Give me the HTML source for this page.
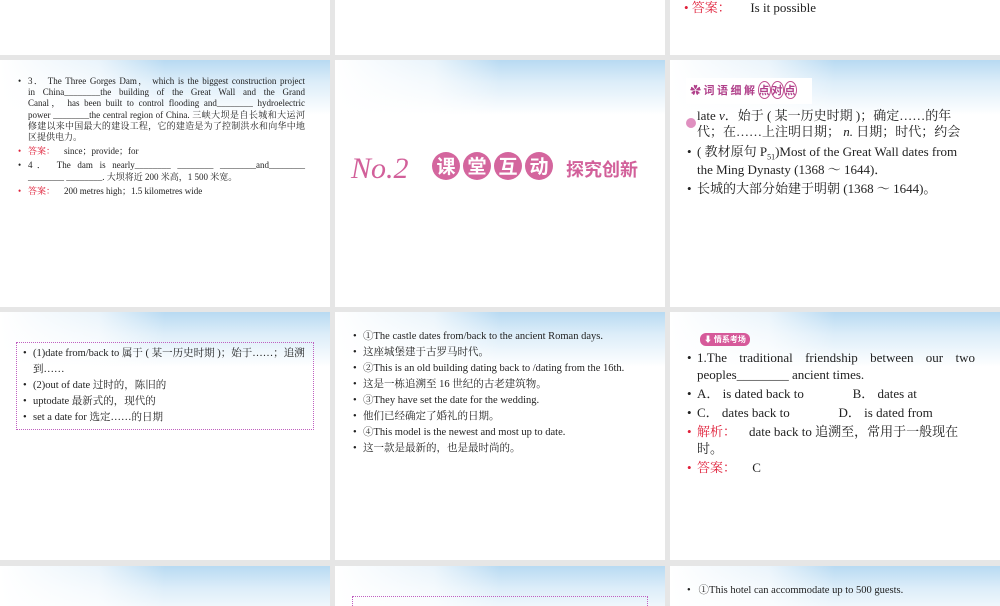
<!DOCTYPE html>
<html><head><meta charset="utf-8"><style>
*{margin:0;padding:0;box-sizing:border-box}
body{width:1000px;height:600px;background:#e6e6e6;position:relative;overflow:hidden;font-family:"Liberation Serif","Noto Serif CJK SC",serif;color:#222}
.s{position:absolute;background:#fff;overflow:hidden}
.sky{position:absolute;left:0;top:0;right:0;height:55px;background:linear-gradient(180deg,#b8daf2 0%,#dcedf9 40%,#fff 100%)}
.sky:after{content:"";position:absolute;left:0;top:0;width:50%;height:100%;background:linear-gradient(90deg,#fff 0%,rgba(255,255,255,.7) 60%,rgba(255,255,255,0))}
.t{position:absolute;white-space:nowrap}
.b:before{content:"•";position:absolute;left:-10px}
.r{color:#e0203a}
.box{position:absolute;border:1px dotted #c060c0}
.j{text-align:justify;text-align-last:justify;white-space:nowrap;overflow:visible}
</style></head><body>
<!-- row 0 -->
<div class="s" style="left:0;top:0;width:330px;height:55px"></div>
<div class="s" style="left:335px;top:0;width:330px;height:55px"><div class="t r" style="left:64px;top:-4px;font-size:6px">date</div></div>
<div class="s" style="left:670px;top:0;width:330px;height:55px"><div class="t" style="left:14px;top:-3px;font-size:13px"><span class="r">• 答案：</span>&nbsp;&nbsp;&nbsp;&nbsp;&nbsp;&nbsp;Is it possible</div></div>

<!-- row 1 -->
<div class="s" style="left:0;top:60px;width:330px;height:247px"><div class="sky"></div>
<div style="position:absolute;left:28px;top:16px;width:277px;font-size:9px;line-height:11.2px">
<div style="position:relative"><span class="b"></span>
<div class="j">3． The Three Gorges Dam， which is the biggest construction project</div>
<div class="j">in China________the building of the Great Wall and the Grand</div>
<div class="j">Canal， has been built to control flooding and________ hydroelectric</div>
<div class="j">power ________the central region of China. 三峡大坝是自长城和大运河</div>
<div class="j">修建以来中国最大的建设工程，它的建造是为了控制洪水和向华中地</div>
<div>区提供电力。</div></div>
<div style="position:relative;margin-top:3px"><span class="b r"></span><span class="r">答案：</span>&nbsp;&nbsp;&nbsp;&nbsp;since；provide；for</div>
<div style="position:relative;margin-top:3px"><span class="b"></span><div class="j">4． The dam is nearly________ ________ ________and________</div><div>________ ________. 大坝将近 200 米高，1 500 米宽。</div></div>
<div style="position:relative;margin-top:3px"><span class="b r"></span><span class="r">答案：</span>&nbsp;&nbsp;&nbsp;&nbsp;200 metres high；1.5 kilometres wide</div>
</div></div>

<div class="s" style="left:335px;top:60px;width:330px;height:247px"><div class="sky"></div>
<div class="t" style="left:16px;top:92px;font-size:30px;font-style:italic;color:#d2609a;font-family:'Liberation Serif',serif">No.2</div>
<div style="position:absolute;left:97px;top:92px;display:flex;gap:3px">
<span style="width:28px;height:28px;border-radius:50%;background:#d4669e;color:#fff;font:bold 19px/28px 'Noto Sans CJK SC',sans-serif;text-align:center">课</span>
<span style="width:28px;height:28px;border-radius:50%;background:#d4669e;color:#fff;font:bold 19px/28px 'Noto Sans CJK SC',sans-serif;text-align:center">堂</span>
<span style="width:28px;height:28px;border-radius:50%;background:#d4669e;color:#fff;font:bold 19px/28px 'Noto Sans CJK SC',sans-serif;text-align:center">互</span>
<span style="width:28px;height:28px;border-radius:50%;background:#d4669e;color:#fff;font:bold 19px/28px 'Noto Sans CJK SC',sans-serif;text-align:center">动</span></div>
<div class="t" style="left:231px;top:96px;font:bold 18px 'Noto Sans CJK SC',sans-serif;color:#d2609a">探究创新</div>
</div>

<div class="s" style="left:670px;top:60px;width:330px;height:247px"><div class="sky"></div>
<div style="position:absolute;left:16px;top:18px;width:126px;height:26px;background:#fff"></div>
<div class="t" style="left:20px;top:22px;font:bold 11px 'Noto Sans CJK SC',sans-serif;color:#b0408a">✿ 词 语 细 解 <span style="border:1px solid #c05090;border-radius:50%">点</span><span style="border:1px solid #c05090;border-radius:50%">对</span><span style="border:1px solid #c05090;border-radius:50%">点</span></div>
<div style="position:absolute;left:16px;top:58px;width:10px;height:10px;border-radius:50%;background:#e090c0"></div>
<div style="position:absolute;left:27px;top:48px;width:278px;font-size:13px;line-height:18px">
<div style="line-height:16px">late <i>v</i>．始于 ( 某一历史时期 )；确定……的年<br>代；在……上注明日期； <i>n.</i> 日期；时代；约会</div>
<div style="position:relative;margin-top:3px;white-space:nowrap"><span class="b"></span>( 教材原句 P<sub style="font-size:8px;line-height:0">51</sub>)Most of the Great Wall dates from<br>the Ming Dynasty (1368 ～ 1644)．</div>
<div style="position:relative;margin-top:1px"><span class="b"></span>长城的大部分始建于明朝 (1368 ～ 1644)。</div>
</div></div>

<!-- row 2 -->
<div class="s" style="left:0;top:312px;width:330px;height:248px"><div class="sky"></div>
<div class="box" style="left:16px;top:30px;width:298px;height:88px"></div>
<div style="position:absolute;left:33px;top:34px;width:278px;font-size:10.5px;line-height:16px">
<div style="position:relative"><span class="b"></span>(1)date from/back to 属于 ( 某一历史时期 )；始于……；追溯到……</div>
<div style="position:relative"><span class="b"></span>(2)out of date 过时的，陈旧的</div>
<div style="position:relative"><span class="b"></span>uptodate 最新式的，现代的</div>
<div style="position:relative"><span class="b"></span>set a date for 选定……的日期</div></div></div>

<div class="s" style="left:335px;top:312px;width:330px;height:248px"><div class="sky"></div>
<div style="position:absolute;left:28px;top:17px;font-size:10.5px;line-height:16px">
<div style="position:relative"><span class="b"></span>①The castle dates from/back to the ancient Roman days.</div>
<div style="position:relative"><span class="b"></span>这座城堡建于古罗马时代。</div>
<div style="position:relative"><span class="b"></span>②This is an old building dating back to /dating from the 16th.</div>
<div style="position:relative"><span class="b"></span>这是一栋追溯至 16 世纪的古老建筑物。</div>
<div style="position:relative"><span class="b"></span>③They have set the date for the wedding.</div>
<div style="position:relative"><span class="b"></span>他们已经确定了婚礼的日期。</div>
<div style="position:relative"><span class="b"></span>④This model is the newest and most up to date.</div>
<div style="position:relative"><span class="b"></span>这一款是最新的，也是最时尚的。</div></div></div>

<div class="s" style="left:670px;top:312px;width:330px;height:248px"><div class="sky"></div>
<div class="t" style="left:30px;top:21px;font:bold 8px 'Noto Sans CJK SC',sans-serif;color:#fff;background:#d65a9a;border-radius:6px;padding:1px 4px">⬇ 情系考场</div>
<div style="position:absolute;left:27px;top:37px;width:278px;font-size:13px;line-height:17px">
<div style="position:relative;text-align:justify;text-align-last:justify"><span class="b"></span>1.The traditional friendship between our two</div>
<div>peoples________ ancient times.</div>
<div style="position:relative;margin-top:2px"><span class="b"></span>A． is dated back to&nbsp;&nbsp;&nbsp;&nbsp;&nbsp;&nbsp;&nbsp;&nbsp;&nbsp;&nbsp;&nbsp;&nbsp;&nbsp;&nbsp;&nbsp;B． dates at</div>
<div style="position:relative;margin-top:2px"><span class="b"></span>C． dates back to&nbsp;&nbsp;&nbsp;&nbsp;&nbsp;&nbsp;&nbsp;&nbsp;&nbsp;&nbsp;&nbsp;&nbsp;&nbsp;&nbsp;&nbsp;D． is dated from</div>
<div style="position:relative;margin-top:2px"><span class="b r"></span><span class="r">解析：</span>&nbsp;&nbsp;&nbsp;&nbsp;date back to 追溯至，常用于一般现在时。</div>
<div style="position:relative;margin-top:2px"><span class="b r"></span><span class="r">答案：</span>&nbsp;&nbsp;&nbsp;&nbsp;&nbsp;C</div></div></div>

<!-- row 3 -->
<div class="s" style="left:0;top:566px;width:330px;height:40px"><div class="sky"></div></div>
<div class="s" style="left:335px;top:566px;width:330px;height:40px"><div class="sky"></div><div class="box" style="left:17px;top:30px;width:296px;height:20px"></div></div>
<div class="s" style="left:670px;top:566px;width:330px;height:40px"><div class="sky"></div>
<div class="t" style="left:17px;top:16px;font-size:10.5px">•&nbsp;&nbsp;&nbsp;①This hotel can accommodate up to 500 guests.</div></div>
</body></html>
